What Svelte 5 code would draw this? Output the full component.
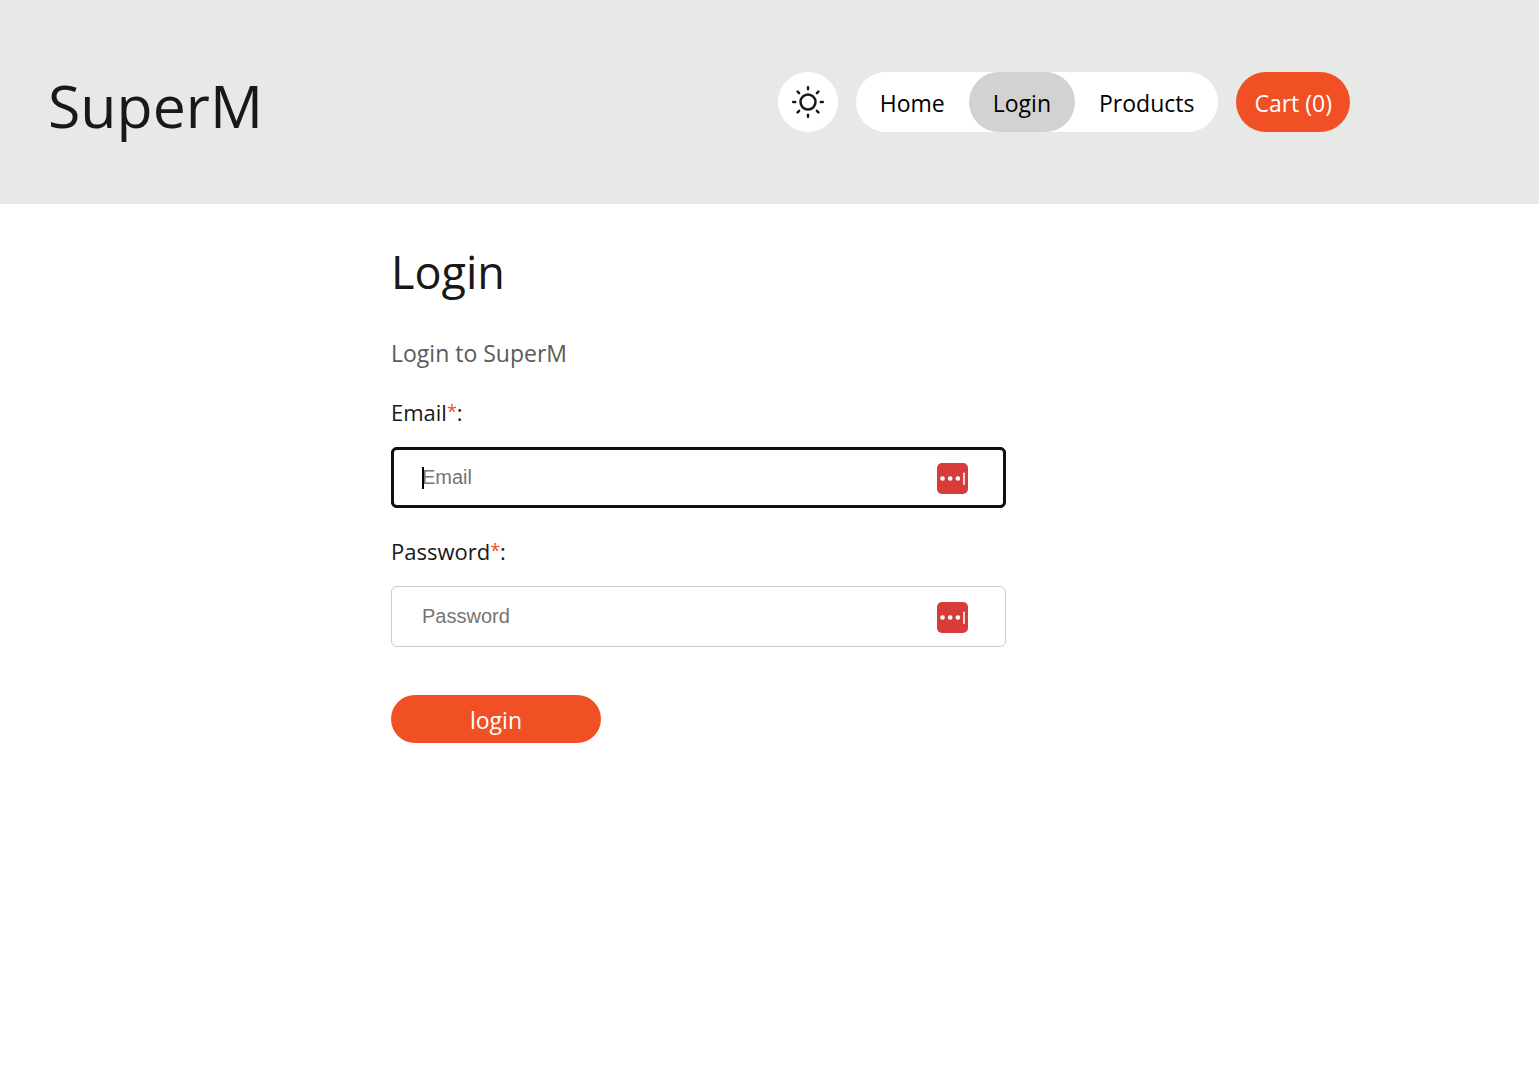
<script>
  import { onMount } from 'svelte';

  const links = [
    { name: 'Home', href: '#home' },
    { name: 'Login', href: '#login' },
    { name: 'Products', href: '#products' }
  ];

  const fields = [
    { id: 'email', label: 'Email', type: 'email' },
    { id: 'password', label: 'Password', type: 'password' }
  ];

  let current = $state('Login');
  let cartCount = $state(0);
  let values = $state({ email: '', password: '' });
  let focused = $state('');

  onMount(() => {
    document.getElementById('email').focus();
    focused = 'email';
  });

  function handleSubmit(event) {
    event.preventDefault();
  }
</script>

<header>
  <div class="header-inner">
    <a class="brand" href="#home">SuperM</a>

    <div class="actions">
      <button class="theme" type="button" aria-label="Toggle theme">
        <svg viewBox="0 0 34 34" width="34" height="34" aria-hidden="true">
          <circle cx="17" cy="17" r="7.5" />
          <path d="M17 2.200v2M17 29.800v2M2.200 17h2M29.800 17h2M6.600 6.600l1.500 1.500M25.900 25.900l1.500 1.500M6.600 27.400l1.500-1.500M25.900 8.100l1.500-1.500" />
        </svg>
      </button>

      <nav>
        {#each links as link}
          <a
            href={link.href}
            class:active={current === link.name}
            onclick={() => (current = link.name)}
          >{link.name}</a>
        {/each}
      </nav>

      <a class="cart" href="#cart">Cart ({cartCount})</a>
    </div>
  </div>
</header>

<main>
  <h1>Login</h1>
  <p>Login to SuperM</p>

  <form onsubmit={handleSubmit} novalidate>
    {#each fields as field}
      <div class="field">
        <label for={field.id}>{field.label}<span class="required">*</span>:</label>
        <div class="control">
          <input
            id={field.id}
            type={field.type}
            placeholder={field.label}
            bind:value={values[field.id]}
            onfocus={() => (focused = field.id)}
            onblur={() => (focused = '')}
          />
          {#if focused === field.id && !values[field.id]}
            <span class="caret"></span>
          {/if}
          <svg class="manager" viewBox="0 0 31 31" width="31" height="31" aria-hidden="true">
            <rect width="31" height="31" rx="5" fill="#d73c3b" />
            <g fill="#fff">
              <circle cx="5.500" cy="15.500" r="2.300" />
              <circle cx="13.200" cy="15.500" r="2.300" />
              <circle cx="20.900" cy="15.500" r="2.300" />
              <rect x="26.200" y="9.500" width="1.600" height="12.500" rx="0.800" />
            </g>
          </svg>
        </div>
      </div>
    {/each}

    <button class="submit" type="submit">login</button>
  </form>
</main>

<style>
  :global(body) {
    margin: 0;
    background: #fff;
    color: #171917;
    font-family: 'Segoe UI', 'Open Sans', 'Noto Sans', sans-serif;
    font-size: 23px;
  }

  a {
    color: inherit;
    text-decoration: none;
  }

  button {
    border: none;
    font: inherit;
    cursor: pointer;
  }

  header {
    background: #e6e9e6;
  }

  .header-inner {
    display: flex;
    align-items: center;
    justify-content: space-between;
    max-width: 1302px;
    padding: 72px 48px;
  }

  .brand {
    padding-top: 6px;
    font-size: 59px;
    line-height: 54px;
  }

  .actions {
    display: flex;
    gap: 18px;
  }

  .theme {
    display: grid;
    place-items: center;
    width: 60px;
    height: 60px;
    padding: 0;
    border-radius: 50%;
    background: #fff;
  }

  .theme svg {
    fill: none;
    stroke: #171917;
    stroke-width: 2.5;
    stroke-linecap: round;
  }

  nav {
    display: flex;
    border-radius: 30px;
    background: #fff;
    color: #000;
  }

  nav a {
    padding: 2px 24px 0;
    border-radius: 30px;
    line-height: 58px;
  }

  nav a.active {
    background: #d2d2d2;
  }

  .cart {
    padding: 2px 18px 0;
    border-radius: 30px;
    background: #f15025;
    color: #fff;
    line-height: 58px;
  }

  main {
    max-width: 757px;
    margin: 0 auto;
    padding-top: 36px;
  }

  h1 {
    margin: 0;
    font-size: 45px;
    font-weight: 400;
    line-height: 64px;
  }

  p {
    margin: 33px 0 27px;
    color: #5a5b5a;
    line-height: 32px;
  }

  form {
    max-width: 615px;
  }

  .field {
    margin-bottom: 27px;
  }

  label {
    display: block;
    margin-bottom: 19px;
    font-size: 22px;
    line-height: 32px;
  }

  .required {
    color: #f15025;
    font-size: 18px;
    line-height: 1;
    vertical-align: 3px;
  }

  .control {
    position: relative;
  }

  input {
    display: block;
    box-sizing: border-box;
    width: 100%;
    height: 61px;
    padding: 0 72px 0 30px;
    border: 1px solid #ccc;
    border-radius: 6px;
    background: #fff;
    color: #171917;
    font-family: Arial, 'Liberation Sans', sans-serif;
    font-size: 20px;
  }

  input::placeholder {
    color: #757575;
  }

  input:focus {
    border-color: #101010;
    outline: 3px solid #101010;
    outline-offset: -3px;
  }

  /* the empty field draws its own caret, two pixels wide */
  input:placeholder-shown {
    caret-color: transparent;
  }

  .caret {
    position: absolute;
    top: 20px;
    left: 31px;
    width: 2px;
    height: 22px;
    background: #000;
    pointer-events: none;
  }

  .manager {
    position: absolute;
    top: 16px;
    right: 38px;
  }

  .submit {
    width: 210px;
    height: 48px;
    margin-top: 21px;
    padding: 2px 0 0;
    border-radius: 24px;
    background: #f15025;
    color: #fff;
  }
</style>
